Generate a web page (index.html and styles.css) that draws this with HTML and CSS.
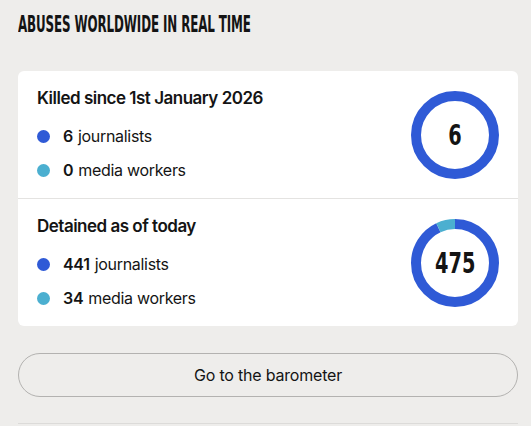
FILE: index.html
```html
<!DOCTYPE html>
<html lang="en">
<head>
<meta charset="utf-8">
<title>Abuses worldwide in real time</title>
<link rel="stylesheet" href="styles.css">
</head>
<body>
<section class="widget">
  <h2 class="title"><span>ABUSES WORLDWIDE IN REAL TIME</span></h2>
  <div class="card">
    <div class="stat">
      <div class="info">
        <h3 class="stat-title">Killed since 1st January 2026</h3>
        <ul class="legend">
          <li><span class="dot dot-journalists"></span><b>6</b> journalists</li>
          <li><span class="dot dot-workers"></span><b>0</b> media workers</li>
        </ul>
      </div>
      <div class="donut">
        <svg width="88" height="88" viewBox="0 0 88 88">
          <circle cx="44" cy="44" r="39" fill="none" stroke="#2f5ad6" stroke-width="10" stroke-dasharray="245.04 245.04" transform="rotate(-90 44 44)"/>
        </svg>
        <span class="donut-value"><span>6</span></span>
      </div>
    </div>
    <div class="stat">
      <div class="info">
        <h3 class="stat-title">Detained as of today</h3>
        <ul class="legend">
          <li><span class="dot dot-journalists"></span><b>441</b> journalists</li>
          <li><span class="dot dot-workers"></span><b>34</b> media workers</li>
        </ul>
      </div>
      <div class="donut">
        <svg width="88" height="88" viewBox="0 0 88 88">
          <circle cx="44" cy="44" r="39" fill="none" stroke="#2f5ad6" stroke-width="10" stroke-dasharray="227.50 245.04" transform="rotate(-90 44 44)"/>
          <circle cx="44" cy="44" r="39" fill="none" stroke="#4bafd0" stroke-width="10" stroke-dasharray="17.54 245.04" stroke-dashoffset="-227.50" transform="rotate(-90 44 44)"/>
        </svg>
        <span class="donut-value"><span>475</span></span>
      </div>
    </div>
  </div>
  <a class="button" href="#">Go to the barometer</a>
  <hr class="rule">
</section>
</body>
</html>
```
FILE: styles.css
```css
* { box-sizing: border-box; }
html, body { margin: 0; padding: 0; }
body {
  background: #eeedeb;
  font-family: Inter, "Liberation Sans", Arial, sans-serif;
  color: #141414;
}
.widget {
  padding: 13px 13px 0 18px;
  display: flex;
  flex-direction: column;
}
.title {
  margin: 0;
  height: 23px;
  font-family: "DejaVu Sans", sans-serif;
  font-stretch: condensed;
  font-weight: 700;
  font-size: 23px;
  line-height: 23px;
  white-space: nowrap;
}
.title span {
  display: inline-block;
  transform: scaleX(0.575);
  transform-origin: left center;
  letter-spacing: -0.2px;
}
.card {
  margin-top: 35px;
  background: #fff;
  border-radius: 6px;
  display: flex;
  flex-direction: column;
}
.stat {
  display: flex;
  align-items: center;
  justify-content: space-between;
  padding: 16px 19px 16px 19px;
}
.stat + .stat { border-top: 1px solid #e4e3e1; }
.stat-title {
  margin: 0;
  font-size: 17px;
  line-height: 22px;
  font-weight: 600;
  letter-spacing: -0.5px;
}
.legend {
  list-style: none;
  margin: 15px 0 0;
  padding: 0;
  display: flex;
  flex-direction: column;
  gap: 10px;
}
.legend li {
  display: flex;
  align-items: center;
  font-size: 16px;
  line-height: 24px;
  letter-spacing: -0.3px;
}
.legend b { font-weight: 600; margin-right: 5px; }
.dot {
  width: 13px;
  height: 13px;
  border-radius: 50%;
  margin-right: 13px;
  flex: none;
}
.dot-journalists { background: #2f5ad6; }
.dot-workers { background: #4bafd0; }
.donut {
  position: relative;
  width: 88px;
  height: 88px;
  flex: none;
}
.donut svg { display: block; }
.donut-value {
  position: absolute;
  inset: 0;
  display: flex;
  align-items: center;
  justify-content: center;
  font-family: "DejaVu Sans", sans-serif;
  font-stretch: condensed;
  font-weight: 700;
  font-size: 29px;
}
.donut-value span {
  display: inline-block;
  transform: scaleX(0.74);
}
.button {
  margin-top: 27px;
  height: 44px;
  border: 1px solid #b3b2b0;
  border-radius: 22px;
  display: flex;
  align-items: center;
  justify-content: center;
  color: #141414;
  text-decoration: none;
  font-size: 16px;
  letter-spacing: -0.2px;
}
.rule {
  margin: 26px 0 0;
  border: 0;
  border-top: 1px solid #dcdbd9;
}
```
